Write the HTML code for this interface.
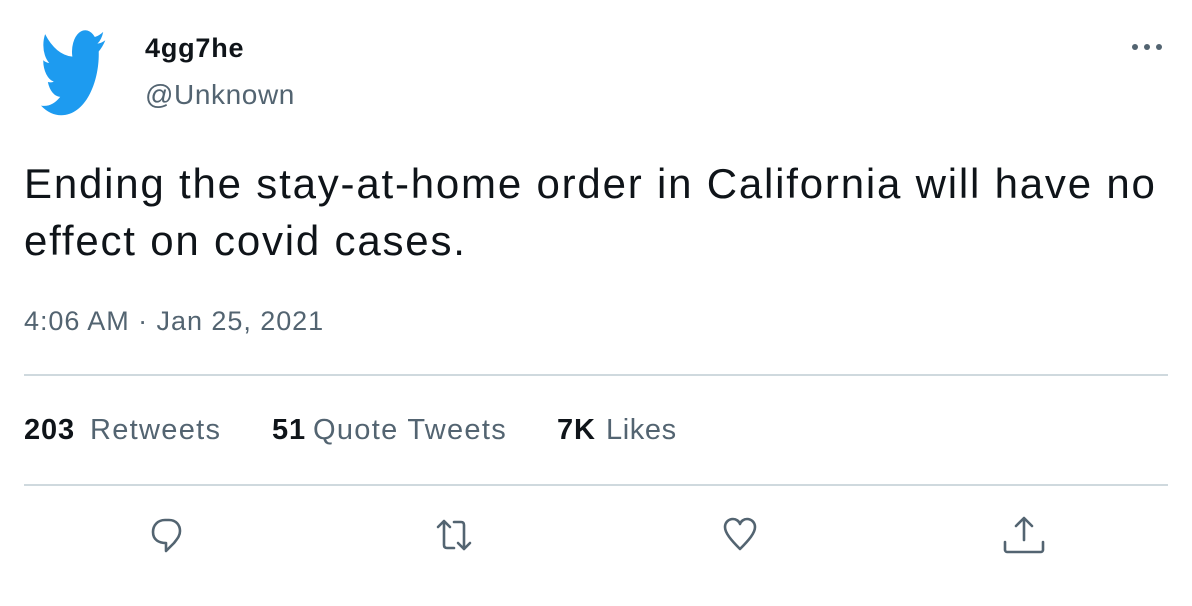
<!DOCTYPE html>
<html><head><meta charset="utf-8"><style>
body{margin:0;width:1192px;height:606px;background:#fff;font-family:"Liberation Sans",sans-serif;position:relative;overflow:hidden}
.a{position:absolute;white-space:nowrap}
.g{color:#536471}
.hr{position:absolute;left:24px;width:1144px;height:2px;background:#cfd9de}
svg{position:absolute}
.s{font-size:29px;letter-spacing:0.9px;color:#0f1419;top:414px}
.s.g{color:#536471}
</style></head><body>
<svg style="left:38px;top:27px" width="68" height="92" viewBox="0 2 24 20" preserveAspectRatio="none"><path fill="#1d9bf0" d="M23.643 4.937c-.835.37-1.732.62-2.675.69a4.67 4.67 0 002.048-2.578 9.3 9.3 0 01-2.958 1.13 4.66 4.66 0 00-7.938 4.25 13.229 13.229 0 01-9.602-4.868c-.4.69-.63 1.490-.63 2.342A4.66 4.66 0 003.960 9.824a4.647 4.647 0 01-2.110-.583v.06a4.66 4.660 0 003.737 4.568 4.692 4.692 0 01-2.104.08 4.661 4.661 0 004.352 3.234 9.348 9.348 0 01-6.786 1.897 13.2 13.2 0 007.140 2.093c8.570 0 13.255-7.098 13.255-13.254 0-.2-.005-.402-.014-.602a9.470 9.470 0 002.323-2.410z"/></svg>
<div class="a" style="left:145px;top:33px;font-size:27px;letter-spacing:0.8px;font-weight:bold;color:#0f1419">4gg7he</div>
<div class="a g" style="left:145px;top:79px;font-size:28px;letter-spacing:0.6px">@Unknown</div>
<svg style="left:1128px;top:40px" width="40" height="14"><circle cx="7" cy="7" r="3" fill="#536471"/><circle cx="19" cy="7" r="3" fill="#536471"/><circle cx="31" cy="7" r="3" fill="#536471"/></svg>
<div class="a" style="left:24px;top:155px;font-size:42px;letter-spacing:1.8px;line-height:57px;color:#0f1419">Ending the stay-at-home order in California will have no<br>effect on covid cases.</div>
<div class="a g" style="left:24px;top:306px;font-size:27px;letter-spacing:0.95px">4:06 AM · Jan 25, 2021</div>
<div class="hr" style="top:374px"></div>
<div class="a s" style="left:24px"><b>203</b></div><div class="a s g" style="left:90px;letter-spacing:1.3px">Retweets</div>
<div class="a s" style="left:272px"><b>51</b></div><div class="a s g" style="left:313px;letter-spacing:1.3px">Quote Tweets</div>
<div class="a s" style="left:557px"><b>7K</b></div><div class="a s g" style="left:606px;letter-spacing:0.6px">Likes</div>
<div class="hr" style="top:484px"></div>
<svg style="left:147px;top:515px" width="40" height="40" viewBox="0 0 40 40" fill="none" stroke="#536471" stroke-width="2.6" stroke-linejoin="round"><path d="M18 5h4c7 0 11 5 11 11 0 5-3 8-6 12l-8 8v-8c-7 0-13-3-13-11 0-7 5-12 12-12z"/></svg>
<svg style="left:432px;top:515px" width="44" height="40" viewBox="0 0 44 40" fill="none" stroke="#536471" stroke-width="2.6" stroke-linejoin="round" stroke-linecap="round"><path d="M6 12l6-6 6 6M12 6v24c0 2 1 3 3 3h7"/><path d="M22 7h7c2 0 3 1 3 3v24M26 28l6 6 6-6"/></svg>
<svg style="left:719px;top:514px" width="42" height="40" viewBox="0 0 42 40" fill="none" stroke="#536471" stroke-width="2.6" stroke-linejoin="round"><path d="M21 35C12 26 6 19 6 13c0-5 4-8 8-8 3 0 6 2 7 5 1-3 4-5 7-5 4 0 8 3 8 8 0 6-6 13-15 22z"/></svg>
<svg style="left:1002px;top:512px" width="44" height="44" viewBox="0 0 44 44" fill="none" stroke="#536471" stroke-width="2.6" stroke-linejoin="round" stroke-linecap="round"><path d="M22 6v22M14 14l8-8 8 8"/><path d="M3 30v8c0 1 1 2 2 2h34c1 0 2-1 2-2v-8"/></svg>
</body></html>
